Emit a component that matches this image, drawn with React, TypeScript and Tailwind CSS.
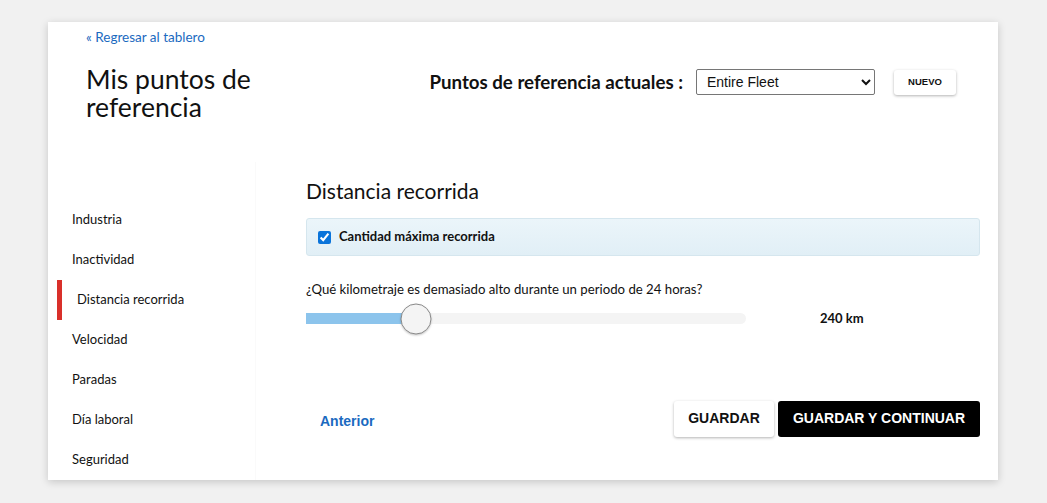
import { useState } from 'react';

const NAV_ITEMS = ['Industria', 'Inactividad', 'Distancia recorrida', 'Velocidad', 'Paradas', 'Día laboral', 'Seguridad'];

export default function App() {
  const [active] = useState('Distancia recorrida');
  const [checked, setChecked] = useState(true);
  const km = 240;
  const pct = 25;

  return (
    <div className="min-h-[503px] bg-[#f1f1f1] pt-[22px] pl-[48px] font-['Lato','Noto_Sans',sans-serif] text-[#111]">
      <div className="w-[950px] h-[458px] bg-white shadow-[0_2px_8px_rgba(0,0,0,0.18)] flex flex-col">
        {/* Header */}
        <div className="h-[142px] pl-[38px] pr-[42px] pt-[2px]">
          <a href="#" className="text-[13.5px] leading-[18px] text-[#1b6ac0]">« Regresar al tablero</a>
          <div className="mt-[17px] flex items-start justify-between">
            <h1 className="w-[205px] text-[26.5px] leading-[28px] font-normal text-[#111]">Mis puntos de referencia</h1>
            <div className="flex items-center mt-[3px]">
              <span className="text-[18.7px] font-bold text-[#111] mr-[13px]">Puntos de referencia actuales :</span>
              <select className="w-[179px] h-[26px] border border-[#767676] rounded-[2px] bg-white pl-[6px] text-[14px] font-['Liberation_Sans',Arial,sans-serif] text-[#111]">
                <option>Entire Fleet</option>
              </select>
              <button className="ml-[19px] w-[62px] h-[25px] bg-white rounded-[3px] shadow-[0_1px_3px_rgba(0,0,0,0.3)] text-[9.5px] font-bold font-['Liberation_Sans',Arial,sans-serif] text-[#111]">NUEVO</button>
            </div>
          </div>
        </div>

        {/* Body */}
        <div className="flex flex-1">
          <nav className="w-[208px] pt-[38px] border-r border-[#fafafa]">
            {NAV_ITEMS.map((item) => {
              const isActive = item === active;
              return (
                <div key={item} className="h-[40px] flex items-center">
                  {isActive ? (
                    <>
                      <div className="ml-[9px] w-[5px] h-[40px] bg-[#d9302a]" />
                      <span className="ml-[15px] text-[13px] text-[#111]">{item}</span>
                    </>
                  ) : (
                    <span className="ml-[24px] text-[13px] text-[#111]">{item}</span>
                  )}
                </div>
              );
            })}
          </nav>

          <main className="flex-1 pl-[50px] pr-[18px] pt-[15px] flex flex-col">
            <h2 className="text-[21px] leading-[28px] font-normal text-[#111]">Distancia recorrida</h2>
            <div className="mt-[13px] h-[38px] flex items-center px-[11px] rounded-[3px] border border-[#d5e6ee] bg-gradient-to-b from-[#ebf5fa] to-[#e1eff6]">
              <input
                type="checkbox"
                checked={checked}
                onChange={(e) => setChecked(e.target.checked)}
                className="w-[13px] h-[13px] m-0 accent-[#0a74da]"
              />
              <span className="ml-[8px] text-[13px] font-bold text-[#111]">Cantidad máxima recorrida</span>
            </div>

            <p className="mt-[24px] text-[13.2px] leading-[18px] text-[#111]">¿Qué kilometraje es demasiado alto durante un periodo de 24 horas?</p>
            <div className="mt-[11px] flex items-center">
              <div className="relative w-[440px] h-[11px] rounded-full bg-[#f4f4f4]">
                <div className="h-full bg-[#8cc4ec]" style={{ width: `${pct}%` }} />
                <div
                  className="absolute top-1/2 -translate-y-1/2 -translate-x-1/2 w-[31px] h-[31px] rounded-full bg-[#f4f4f4] border border-[#8a8a8a] shadow-[0_1px_2px_rgba(0,0,0,0.2)]"
                  style={{ left: `${pct}%` }}
                />
              </div>
              <span className="ml-[74px] text-[13px] font-bold text-[#111]">{km} km</span>
            </div>

            <div className="mt-[72px] flex items-center justify-between">
              <a href="#" className="ml-[14px] mt-[6px] text-[14px] font-bold font-['Liberation_Sans',Arial,sans-serif] text-[#1b6ac0]">Anterior</a>
              <div className="flex gap-[4px]">
                <button className="w-[100px] h-[36px] bg-white rounded-[3px] shadow-[0_1px_3px_rgba(0,0,0,0.3)] text-[14px] font-bold font-['Liberation_Sans',Arial,sans-serif] text-[#111]">GUARDAR</button>
                <button className="w-[202px] h-[36px] bg-black rounded-[3px] text-[14px] font-bold font-['Liberation_Sans',Arial,sans-serif] text-white">GUARDAR Y CONTINUAR</button>
              </div>
            </div>
          </main>
        </div>
      </div>
    </div>
  );
}
